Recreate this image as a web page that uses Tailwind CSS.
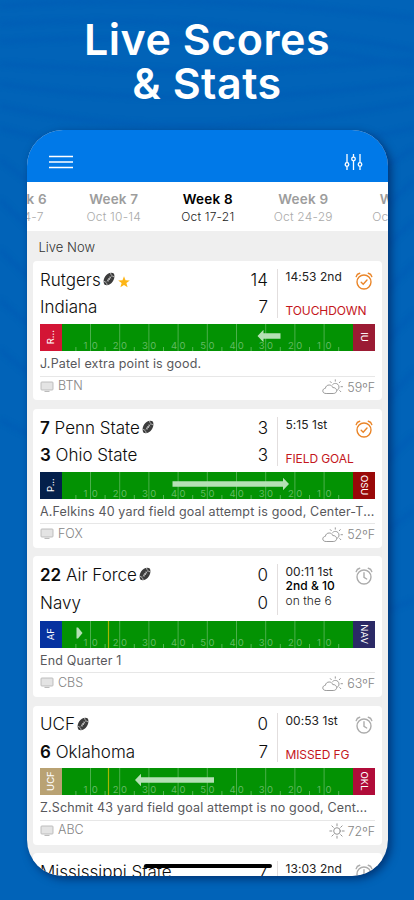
<!DOCTYPE html>
<html lang="en">
<head>
<meta charset="utf-8">
<title>Live Scores &amp; Stats</title>
<script src="https://cdn.jsdelivr.net/npm/@tailwindcss/browser@4"></script>
</head>
<body class="relative w-[414px] h-[900px] overflow-hidden bg-[#0163b8] font-['Inter',sans-serif]">
<svg class="absolute inset-0 w-[414px] h-[900px]" viewBox="0 0 414 900" fill="none" stroke="#0058b4" stroke-opacity=".4" stroke-width="5" style="filter:blur(2px)">
  <path d="M0 6Q200-8 414 18M0 24Q200 12 414 50M0 42Q210 28 414 66M0 64Q200 78 414 60M0 84Q190 112 414 82M0 106Q180 146 414 102M0 128Q180 180 414 128"/>
  <path d="M388 165L414 148M388 205L414 180M388 245L414 220M388 290L414 262M388 340L414 312M388 400L414 370M388 460L414 434M388 530L414 510M388 610L414 600M0 160L27 180M0 200L27 226M0 250L27 276M0 300L27 324M0 350L27 372M0 420L27 434"/>
</svg>
<svg class="hidden">
  <symbol id="ball" viewBox="0 0 12 14">
    <path d="M10.800 1.400C8-.2 4.200 1.300 2.100 4.600C.3 7.500.1 10.900 1.600 12.800C4.200 14 7.900 12.400 9.900 9.200C11.600 6.500 11.900 3.500 10.800 1.400Z" fill="#3c3c3c"/>
    <path d="M4 9.600L8.400 4.200M4 7.700L5.900 9.300M5.100 6.300L7 7.900M6.300 4.900L8.200 6.500M.9 9.400C2.600 9.600 4 11 4.200 13.300M7.500.9C7.800 3 9.200 4.600 11.500 4.900" stroke="#d0d0d0" stroke-width=".8" fill="none"/>
  </symbol>
  <symbol id="star" viewBox="0 0 12 12"><path d="M6 .2L7.500 4.300L11.800 4.400L8.400 7.100L9.600 11.300L6 8.900L2.400 11.300L3.600 7.100L.2 4.400L4.500 4.300Z" fill="#fdb515"/></symbol>
  <symbol id="alarmOn" viewBox="0 0 18 18">
    <g fill="none" stroke="#ea8528" stroke-width="1.400" stroke-linecap="round"><circle cx="9" cy="10" r="7"/><path d="M6.200 10.300L8.200 12.200L12 8M1.200 4.600C1.600 3 3 1.700 4.700 1.300M16.800 4.600C16.400 3 15 1.700 13.300 1.300"/></g>
  </symbol>
  <symbol id="alarm" viewBox="0 0 18 18">
    <g fill="none" stroke="#acacac" stroke-width="1.400" stroke-linecap="round"><circle cx="9" cy="10" r="7"/><path d="M9 5.800V10.300L11.700 12M1.200 4.600C1.600 3 3 1.700 4.700 1.300M16.800 4.600C16.400 3 15 1.700 13.300 1.300"/></g>
  </symbol>
  <symbol id="tv" viewBox="0 0 14 12">
    <rect x="1" y="1" width="12" height="8" rx=".8" fill="#e4e4e4" stroke="#b8b8b8" stroke-width=".9"/><path d="M4.500 10.400H9.500" stroke="#b4b4b4"/>
  </symbol>
  <symbol id="cloudsun" viewBox="0 0 22 16">
    <g fill="none" stroke="#8e8e8e" stroke-width=".9" stroke-linecap="round"><path d="M3.800 14.500C1.900 14.500.8 13.400.8 11.900C.8 10.400 1.900 9.500 3.300 9.400C3.700 7.200 5.200 6 7.200 6C9 6 10.200 7 10.800 8.600C12.900 8.400 14.600 9.700 14.600 11.600C14.600 13.300 13.400 14.500 11.600 14.500Z"/><path d="M10.600 5.600C11.300 4.800 12.200 4.400 13.300 4.400C15.400 4.400 17 6 17 8C17 9.500 16.400 10.500 15.400 11.200M13.300.8V2.200M8.300 2.600L9.300 3.700M18.300 2.600L17.300 3.700M19 7.700H20.500M17.700 11.600L18.800 12.700"/></g>
  </symbol>
  <symbol id="sun" viewBox="0 0 16 16">
    <g fill="none" stroke="#8e8e8e" stroke-width=".95" stroke-linecap="round"><circle cx="8" cy="8" r="3.300"/><path d="M8 .8V2.800M8 13.200V15.200M.8 8H2.800M13.200 8H15.200M2.900 2.900L4.300 4.300M11.700 11.700L13.100 13.100M2.900 13.100L4.300 11.700M11.700 4.300L13.100 2.900"/></g>
  </symbol>
</svg>

<h1 class="relative pt-[17px] text-center text-white font-semibold text-[43px] leading-[44px] tracking-[0.5px]">Live Scores<br>&amp; Stats</h1>

<main class="relative mt-[25px] ml-[27px] w-[361px] h-[746px] rounded-[36px] overflow-hidden bg-[#efefef] flex flex-col">
  <header class="h-[52px] shrink-0 bg-[#0079e8] flex justify-between items-start pl-[22px] pr-[25px] pt-[23px]">
    <svg class="w-[24px] h-[18px]" viewBox="0 0 24 18"><path d="M0 3.500H24M0 9H24M0 14.500H24" stroke="#fff" stroke-width="1.400"/></svg>
    <svg class="w-[19px] h-[18px]" viewBox="0 0 19 18" fill="none" stroke="#fff" stroke-width="1.300"><path d="M3 1V9.500M3 13.500V17M9.500 1V4M9.500 8V17M16 1V9.500M16 13.500V17"/><circle cx="3" cy="11.500" r="1.800"/><circle cx="9.500" cy="6" r="1.800"/><circle cx="16" cy="11.500" r="1.800"/></svg>
  </header>
  <nav class="h-[49px] shrink-0 bg-white flex justify-center text-center whitespace-nowrap text-[12px] leading-[17px] font-light text-[#aaa] pt-[9px] pl-[3.500px] tracking-[0.200px]">
    <div class="w-[90px] shrink-0"><b class="block text-[13.500px] font-semibold text-[#9d9d9d]">Week 6</b>Oct 4-7</div>
    <div class="w-[94px] shrink-0"><b class="block text-[13.500px] font-semibold text-[#9d9d9d]">Week 7</b>Oct 10-14</div>
    <div class="w-[94px] shrink-0 text-[#222]"><b class="block text-[13.500px] font-semibold text-black">Week 8</b>Oct 17-21</div>
    <div class="w-[97px] shrink-0"><b class="block text-[13.500px] font-semibold text-[#9d9d9d]">Week 9</b>Oct 24-29</div>
    <div class="w-[90px] shrink-0"><b class="block pl-[22px] text-[13.500px] font-semibold text-[#9d9d9d]">Week 10</b>Oct 31-5</div>
  </nav>
  <h2 class="h-[30px] shrink-0 pl-[11.500px] text-[13px] leading-[32px] font-light text-[#333]">Live Now</h2>
  <section id="games" class="flex flex-col px-[6px]"></section>
  <div class="absolute left-[117px] top-[734px] w-[128px] h-[4px] rounded-full bg-black"></div>
</main>
<div class="absolute left-[27px] top-[130px] w-[361px] h-[746px] rounded-[36px] shadow-[3px_3px_8px_rgba(0,20,70,0.6)] pointer-events-none"></div>

<script>
const games = [
  {h:139, gap:9, head:63, second:27.5, a:['','Rutgers',14], b:['','Indiana',7], ball:1, star:1, clock:'14:53 2nd', event:'TOUCHDOWN', on:1, L:['R...','#d31535'], R:['IU','#9b1b33'], arrow:[195.5,218.5], play:'J.Patel extra point is good.', net:'BTN', wx:'cloudsun', temp:'59ºF'},
  {h:139, gap:8, head:62.5, second:27.5, a:['7','Penn State',3], b:['3','Ohio State',3], ball:1, clock:'5:15 1st', event:'FIELD GOAL', on:1, L:['P...','#04204b'], R:['OSU','#990808'], arrow:[227,110.5], play:'A.Felkins 40 yard field goal attempt is good, Center-T...', net:'FOX', wx:'cloudsun', temp:'52ºF'},
  {h:141, gap:8.5, head:64.5, second:28.5, a:['22','Air Force',0], b:['','Navy',0], ball:1, clock:'00:11 1st', down:'2nd & 10', spot:'on the 6', L:['AF','#0632a0'], R:['NAV','#2b2a66'], tri:14.5, first:46.5, play:'End Quarter 1', net:'CBS', wx:'cloudsun', temp:'63ºF'},
  {h:139.5, gap:8, head:62.5, second:27.5, a:['','UCF',0], b:['6','Oklahoma',7], ball:1, clock:'00:53 1st', event:'MISSED FG', L:['UCF','#b9a273'], R:['OKL','#b00c39'], arrow:[73,152], first:46.5, play:'Z.Schmit 43 yard field goal attempt is no good, Cent...', net:'ABC', wx:'sun', temp:'72ºF'},
  {h:23, gap:0, head:62.5, second:27.5, a:['','Mississippi State',7], clock:'13:03 2nd'}
];
const team = (t, extra) => `<div class="flex items-center h-[24px] text-[17px] font-light text-[#0c0c0c]"><span class="whitespace-nowrap">${t[0] ? `<b class="font-semibold">${t[0]}</b> ` : ''}${t[1]}</span>${extra}<span class="ml-auto">${t[2]}</span></div>`;
const field = g => {
  let s = '';
  for (let i = 1; i < 10; i++) {
    const x = i * 29.2 - 0.7, n = i > 5 ? 10 - i : i;
    s += `<path d="M${x} 0V27" stroke="#4bb04b" stroke-width="1"/><text x="${x - 7}" y="24.500">${n}</text><text x="${x + 1.3}" y="24.500">0</text>`;
  }
  for (let i = 0; i < 10; i++) s += `<path d="M${i * 29.2 + 13.9} 23V27" stroke="#55b455" stroke-width="1"/>`;
  if (g.first) s += `<path d="M${g.first} 0V27" stroke="#a5b800" stroke-width="1.200"/>`;
  if (g.tri) s += `<path d="M${g.tri} 6.500L${g.tri + 1.5} 6.500L${g.tri + 6} 12L${g.tri + 1.5} 17.500L${g.tri} 17.500Z" fill="#b5e0b5"/>`;
  if (g.arrow) {
    const [tip, tail] = g.arrow, d = tip < tail ? 1 : -1;
    s += `<path d="M${tip} 12L${tip + 6 * d} 5.800V9.300H${tail}V14.800H${tip + 6 * d}V18.200Z" fill="#b5e0b5"/>`;
  }
  return `<svg class="w-[291px] shrink-0 h-[27px] bg-[#039203] text-[9.500px]" viewBox="0 0 291 27" fill="#62ba62">${s}</svg>`;
};
document.getElementById('games').innerHTML = games.map(g => `
<article class="shrink-0 rounded-[4px] bg-white pl-[7px] pr-[7px] overflow-hidden" style="height:${g.h}px;margin-bottom:${g.gap}px">
  <div class="flex pt-[7.500px]" style="height:${g.head}px">
    <div class="w-[228px] flex flex-col" style="gap:${g.second - 24}px">
      ${team(g.a, (g.ball ? '<svg class="w-[12px] h-[14px] ml-[2px] -mt-[3px]"><use href="#ball"/></svg>' : '') + (g.star ? '<svg class="w-[12px] h-[12px] ml-[3px] mt-[3px]"><use href="#star"/></svg>' : ''))}
      ${g.b ? team(g.b, '') : ''}
    </div>
    <div class="ml-[9px] mb-[6px] w-px bg-[#e2dede]"></div>
    <div class="relative flex-1 pl-[7.500px] pt-[1px] pb-[5.500px] flex flex-col text-[12px] leading-[14.500px] whitespace-nowrap text-[#222] tracking-[0.050px]">
      <span>${g.clock}</span>
      ${g.down ? `<span class="font-medium text-black">${g.down}</span><span class="font-light">${g.spot}</span>` : g.event ? `<span class="mt-auto text-[#c4161c] tracking-[-0.100px]">${g.event}</span>` : ''}
      <svg class="absolute right-[2px] top-[3px] w-[18px] h-[18px]"><use href="${g.on ? '#alarmOn' : '#alarm'}"/></svg>
    </div>
  </div>
  ${g.play ? `<div class="h-[27px] flex text-[9.500px] text-white">
    <div class="w-[22px] shrink-0 flex items-center justify-center" style="background:${g.L[1]}"><span class="-rotate-90">${g.L[0]}</span></div>
    ${field(g)}
    <div class="flex-1 flex items-center justify-center" style="background:${g.R[1]}"><span class="rotate-90">${g.R[0]}</span></div>
  </div>
  <div class="h-[25.500px] border-b border-[#e7e7e7] text-[12.500px] leading-[25px] whitespace-nowrap text-[#58585c] tracking-[0.160px]">${g.play}</div>
  <div class="h-[20px] flex items-center text-[12.500px] font-light text-[#858585]">
    <svg class="w-[14px] h-[12px]"><use href="#tv"/></svg><span class="ml-[4px]">${g.net}</span>
    <svg class="ml-auto h-[16px] mt-[1px] ${g.wx === 'sun' ? 'w-[16px]' : 'w-[22px]'}"><use href="#${g.wx}"/></svg><span class="ml-[3px] mt-[3px] text-[12.500px]">${g.temp}</span>
  </div>` : ''}
</article>`).join('');
</script>
</body>
</html>
